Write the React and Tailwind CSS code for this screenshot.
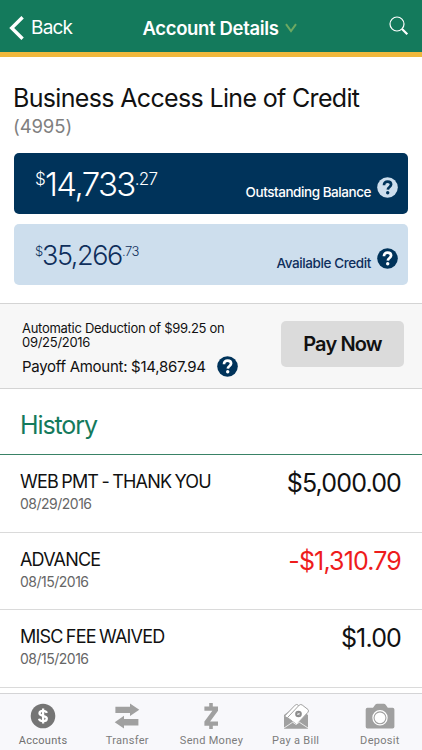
const transactions = [
  { title: 'WEB PMT - THANK YOU', date: '08/29/2016', amount: '$5,000.00' },
  { title: 'ADVANCE', date: '08/15/2016', amount: '-$1,310.79', negative: true },
  { title: 'MISC FEE WAIVED', date: '08/15/2016', amount: '$1.00' }
];

function Help({ className }) {
  return (
    <svg viewBox="0 0 21 21" className={`h-[21px] w-[21px] shrink-0 ${className}`}>
      <circle cx="10.5" cy="10.5" r="10.3" fill="currentColor" />
      <path d="M7 8.2C7 5.9 8.5 4.7 10.6 4.7C12.7 4.7 14.1 5.8 14.1 7.6C14.1 10 11 9.9 10.8 12.6" fill="none" stroke="var(--mark)" strokeWidth="2.7" />
      <circle cx="10.7" cy="15.8" r="1.7" fill="var(--mark)" />
    </svg>
  );
}

function AccountsIcon() {
  return (
    <svg viewBox="0 0 26 26" className="h-[26px] w-[26px]">
      <circle cx="13" cy="13" r="12.3" fill="#757575" />
      <path d="M16.9 9.9C16.2 8.3 14.9 7.8 13 7.8C10.8 7.8 9.5 8.8 9.5 10.3C9.5 13.7 16.8 11.9 16.8 15.5C16.8 17.2 15.3 18.2 13.1 18.2C10.9 18.2 9.5 17.4 9 15.7M13.1 5.5V20.5" fill="none" stroke="#fff" strokeWidth="2.3" />
    </svg>
  );
}

function TransferIcon() {
  return (
    <svg viewBox="0 0 26 26" className="h-[26px] w-[26px]" fill="#a0a0a0">
      <path d="M1.4 3.8H16V.4L25.3 6.8L16 13V10H1.4Z" />
      <path d="M24.4 16.1H10V12.7L.7 19.2L10 25.4V22.4H24.4Z" />
    </svg>
  );
}

function SendIcon() {
  return (
    <svg viewBox="0 0 26 26" className="h-[26px] w-[26px]" fill="#a0a0a0">
      <path d="M11.2 0H14.8V3.4H20V7.7L12.1 18.5H20V22.8H14.8V26H11.2V22.8H6.4V18.5L14.4 7.7H6.4V3.4H11.2Z" />
    </svg>
  );
}

function BillIcon() {
  return (
    <svg viewBox="0 0 26 26" className="h-[26px] w-[26px]">
      <path d="M1 12L13 3L25 12V25.5H1Z" fill="#a0a0a0" />
      <path d="M1.5 13.2L12.2 2.1Q13.5 .9 15 2L17.6 4.6L6.5 16.3Z" fill="#fff" stroke="#a0a0a0" strokeWidth="1" />
      <path d="M4.5 14.6L16.2 2.2Q17.7 .9 19.2 2L25 6.5Q26 7.8 25 9.2L13.5 21.5Z" fill="#fff" stroke="#a0a0a0" strokeWidth="1" />
      <circle cx="15.5" cy="11" r="3.3" fill="#8b8b8b" />
      <path d="M14.1 11.8L16.8 10.2M14.6 9.8L16.4 12.2" stroke="#fff" strokeWidth=".7" />
      <path d="M1 13.5L9.7 19.5L1 25.5Z" fill="#a0a0a0" />
      <path d="M25 13.5L16.3 19.5L25 25.5Z" fill="#a0a0a0" />
      <path d="M1 25.5L9.7 19.2L13 21.5L16.3 19.2L25 25.5Z" fill="#a0a0a0" />
      <path d="M1 25L9.7 19.2L13 21.5L16.3 19.2L25 25" fill="none" stroke="#fff" strokeWidth=".8" />
    </svg>
  );
}

function DepositIcon() {
  return (
    <svg viewBox="0 0 30 26" className="h-[26px] w-[30px]">
      <path d="M2.4 4.8H8L10.2 1.8Q11 .8 12.1 .8H18.8Q19.9 .8 20.7 1.8L22.8 4.8H27.6Q29.4 4.8 29.4 6.6V23.7Q29.4 25.5 27.6 25.5H2.4Q.7 25.5 .7 23.7V6.6Q.7 4.8 2.4 4.8Z" fill="#a0a0a0" />
      <circle cx="15" cy="14.8" r="7.1" fill="none" stroke="#fff" strokeWidth="1.2" />
      <circle cx="15" cy="14.8" r="5.4" fill="#fff" />
    </svg>
  );
}

const tabs = [
  { label: 'Accounts', icon: AccountsIcon, active: true },
  { label: 'Transfer', icon: TransferIcon },
  { label: 'Send Money', icon: SendIcon },
  { label: 'Pay a Bill', icon: BillIcon },
  { label: 'Deposit', icon: DepositIcon }
];

export default function App() {
  return (
    <div className="flex h-[750px] w-[422px] flex-col overflow-hidden bg-white font-['Inter','Liberation_Sans',sans-serif] text-[#111] whitespace-nowrap">
      <header className="grid h-[57px] shrink-0 grid-cols-[142.5px_1fr_32px] items-center border-b-5 border-[#f0b83c] bg-[#147a5c] pt-[3px] text-white">
        <button className="flex items-center gap-[7px] pl-[9px]">
          <svg viewBox="0 0 15 24" className="h-6 w-[15px]">
            <path d="M13.6 1.2L2.7 12L13.6 22.8" fill="none" stroke="#fff" strokeWidth="3.4" />
          </svg>
          <span className="text-[19px] leading-6 tracking-[-0.8px]">Back</span>
        </button>
        <div className="flex items-center gap-[7px]">
          <h1 className="text-[18.5px] leading-6 font-semibold tracking-[-0.35px]">Account Details</h1>
          <svg viewBox="0 0 12 10" className="h-[10px] w-3">
            <path d="M1 1.2L6 8L11 1.2" fill="none" stroke="#6da962" strokeWidth="2" />
          </svg>
        </div>
        <svg viewBox="0 0 20 20" className="-mt-1 -ml-px h-5 w-5" fill="none" stroke="#fff">
          <circle cx="8" cy="8" r="7" strokeWidth="1.2" />
          <path d="M13 13L18.3 18.3" strokeWidth="2.2" />
        </svg>
      </header>

      <section className="flex h-[246px] shrink-0 flex-col px-[14px] pt-[26px]">
        <h2 className="-ml-px h-[30px] text-[25px] leading-[30px] tracking-[-0.66px]">Business Access Line of Credit</h2>
        <p className="-ml-px h-[27px] text-[18.5px] leading-[27px] tracking-[-0.1px] text-[#808080]">(4995)</p>
        <div className="mt-[13px] flex h-[61px] justify-between rounded-[5px] bg-[#00335a] pr-[10px] pl-[21px] text-white">
          <div className="flex pt-[14px] font-light">
            <span className="text-[17px] leading-[24px] tracking-[-0.8px]">$</span>
            <span className="text-[33px] leading-[35px] tracking-[-1.6px]">14,733</span>
            <span className="text-[17px] leading-[24px] tracking-[-0.8px]">.27</span>
          </div>
          <div className="flex items-center gap-[6px] pt-[8px]">
            <span className="pt-[8px] text-[13.5px] leading-4 font-medium tracking-[-0.45px]">Outstanding Balance</span>
            <Help className="text-[#cddeed] [--mark:#00335a]" />
          </div>
        </div>
        <div className="mt-[10px] flex h-[61px] justify-between rounded-[5px] bg-[#cddeed] pr-[10px] pl-[21px] text-[#0f2f5c]">
          <div className="flex pt-[16px] font-light">
            <span className="text-[13px] leading-[22px] tracking-[-1.2px]">$</span>
            <span className="text-[27px] leading-[31px] tracking-[-1.4px]">35,266</span>
            <span className="text-[13px] leading-[22px] tracking-[-0.5px]">.73</span>
          </div>
          <div className="flex items-center gap-[6px] pt-[8px]">
            <span className="pt-[8px] text-[13.5px] leading-4 font-medium tracking-[-0.4px]">Available Credit</span>
            <Help className="text-[#00335a] [--mark:#fff]" />
          </div>
        </div>
      </section>

      <section className="flex h-[86px] shrink-0 justify-between border-y border-[#d4d4d4] bg-[#f7f7f7] pr-[18px] pl-[22px]">
        <div className="pt-[17px]">
          <p className="w-[215px] text-[13px] leading-[14px] tracking-[-0.28px] whitespace-normal">Automatic Deduction of $99.25 on 09/25/2016</p>
          <div className="mt-[7px] flex h-[21px] items-center gap-[11px]">
            <span className="text-[15px] leading-5 tracking-[-0.28px]">Payoff Amount: $14,867.94</span>
            <Help className="text-[#00335a] [--mark:#fff]" />
          </div>
        </div>
        <button className="mt-[17px] h-[46px] w-[123px] rounded-[5px] bg-[#dbdbdb] text-[20px] font-semibold tracking-[-0.85px]">Pay Now</button>
      </section>

      <h3 className="h-[66px] shrink-0 border-b border-[#398266] pt-[21px] pl-5 text-[25px] leading-[30px] tracking-[-1.1px] text-[#147a5c]">History</h3>

      <ul className="shrink-0">
        {transactions.map(t => (
          <li key={t.title} className="flex h-[77.5px] justify-between border-b border-[#dadada] pr-[21px] pl-5">
            <div className="pt-[15px]">
              <p className="text-[18px] leading-6 tracking-[-0.8px] [word-spacing:-1px]">{t.title}</p>
              <p className="text-[14px] leading-5 tracking-[-0.5px] text-[#666]">{t.date}</p>
            </div>
            <p className={`pt-[13px] text-[25px] leading-[30px] tracking-[-0.85px] ${t.negative ? 'text-[#ee1c1c]' : ''}`}>{t.amount}</p>
          </li>
        ))}
      </ul>

      <nav className="mt-auto grid h-[57px] shrink-0 grid-cols-5 border-t border-[#d4d4d6] bg-[#f8f8fb] pl-px">
        {tabs.map(({ label, icon: Icon, active }) => (
          <a key={label} className={`flex flex-col items-center pt-[9px] ${active ? 'text-[#707070]' : 'text-[#7c7c7c]'}`}>
            <Icon />
            <span className="mt-[5px] font-['Roboto','Liberation_Sans',sans-serif] text-[11px] leading-[14px] tracking-[0.3px]">{label}</span>
          </a>
        ))}
      </nav>
    </div>
  );
}
